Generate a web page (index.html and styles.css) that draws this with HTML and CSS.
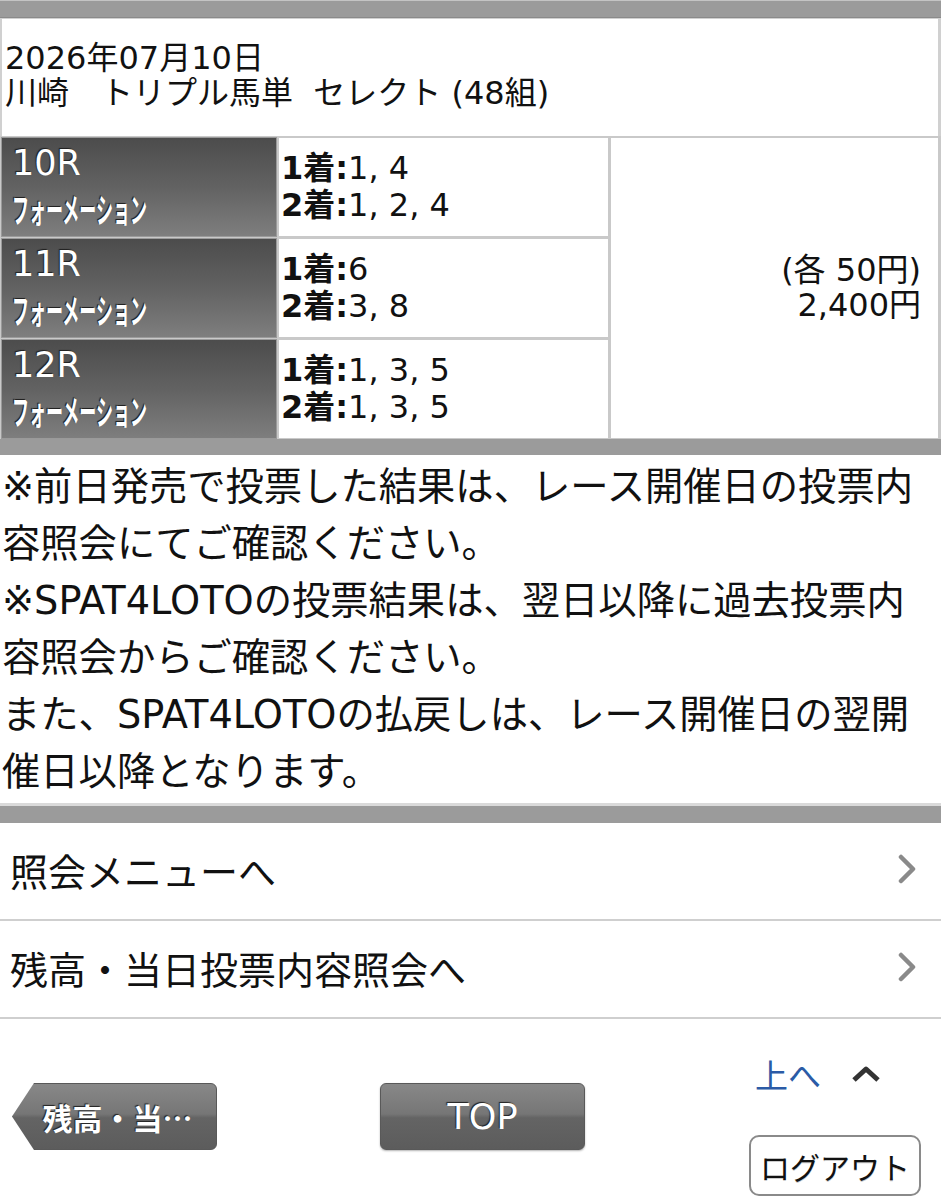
FILE: index.html
```html
<!DOCTYPE html>
<html lang="ja">
<head>
<meta charset="utf-8">
<title>投票内容照会</title>
<link rel="stylesheet" href="styles.css">
</head>
<body>
<div class="band band-top"></div>
<div class="summary">
  <div>2026年07月10日</div>
  <div>川崎　トリプル馬単&nbsp;&nbsp;セレクト (48組)</div>
</div>
<div class="bets">
  <div class="race"><span class="race-no">10R</span><span class="race-type">フォーメーション</span></div>
  <div class="picks"><div><b>1着:</b>1, 4</div><div><b>2着:</b>1, 2, 4</div></div>
  <div class="race"><span class="race-no">11R</span><span class="race-type">フォーメーション</span></div>
  <div class="picks"><div><b>1着:</b>6</div><div><b>2着:</b>3, 8</div></div>
  <div class="race"><span class="race-no">12R</span><span class="race-type">フォーメーション</span></div>
  <div class="picks"><div><b>1着:</b>1, 3, 5</div><div><b>2着:</b>1, 3, 5</div></div>
  <div class="amount"><div>(各 50円)</div><div>2,400円</div></div>
</div>
<div class="band band-low"></div>
<div class="notes">
  <p>※前日発売で投票した結果は、レース開催日の投票内容照会にてご確認ください。</p>
  <p>※SPAT4LOTOの投票結果は、翌日以降に過去投票内容照会からご確認ください。</p>
  <p>また、SPAT4LOTOの払戻しは、レース開催日の翌開催日以降となります。</p>
</div>
<div class="band band-mid"></div>
<div class="menu">
  <div class="menu-item"><span>照会メニューへ</span><svg class="chev" width="20" height="30" viewBox="0 0 20 30"><polyline points="4,3 16,15 4,27" fill="none" stroke="#8a8a8a" stroke-width="4.5" stroke-linecap="round" stroke-linejoin="round"/></svg></div>
  <div class="menu-item"><span>残高・当日投票内容照会へ</span><svg class="chev" width="20" height="30" viewBox="0 0 20 30"><polyline points="4,3 16,15 4,27" fill="none" stroke="#8a8a8a" stroke-width="4.5" stroke-linecap="round" stroke-linejoin="round"/></svg></div>
</div>
<div class="nav">
  <div class="btn btn-back">残高・当…</div>
  <div class="btn btn-top">TOP</div>
  <div class="nav-right">
    <div class="up-row"><span class="up-link">上へ</span><svg class="up-chev" width="30" height="18" viewBox="0 0 30 18"><polyline points="3,15 15,4 27,15" fill="none" stroke="#333" stroke-width="5" stroke-linejoin="round"/></svg></div>
    <div class="logout">ログアウト</div>
  </div>
</div>
</body>
</html>
```

FILE: styles.css
```css
* { box-sizing: border-box; }
html, body { margin: 0; padding: 0; background: #fff; }
body {
  width: 941px;
  font-family: "DejaVu Sans", "Noto Sans CJK JP", sans-serif;
  color: #111;
}

.band { background: #9b9b9b; }
.band-top { height: 18px; border-top: 1px solid #c4c4c4; border-bottom: 1px solid #8a8a8a; }
.band-low { height: 16px; }
.band-mid { height: 20px; border-top: 3px solid #dadada; }

.summary {
  height: 118px;
  border-left: 2px solid #d0d0d0;
  border-right: 3px solid #d0d0d0;
  border-top: 1px solid #d0d0d0;
  padding: 22px 3px 0;
  font-size: 32px;
  line-height: 35px;
}

.bets {
  display: grid;
  grid-template-columns: 274px 329px 327px;
  grid-template-rows: repeat(3, 98px);
  gap: 3px;
  padding: 2px 3px 1px 2px;
  background: #c9c9c9;
}
.race {
  grid-column: 1;
  display: flex;
  flex-direction: column;
  padding: 4px 0 0 10px;
  background: linear-gradient(to bottom, #4c4c4c 0%, #626262 50%, #7e7e7e 100%);
  box-shadow: 0 0 0 1px #9a9a9a;
  color: #fff;
  overflow: hidden;
}
.race-no {
  font-size: 35px;
  line-height: 42px;
  text-shadow: -1px -1px 1px #1e1e1e;
}
.race-type {
  display: block;
  width: 272px;
  font-family: "Noto Sans CJK JP", sans-serif;
  font-weight: bold;
  font-size: 34px;
  line-height: 50px;
  white-space: nowrap;
  transform: scaleX(0.5);
  transform-origin: left center;
  text-shadow: -2px -1px 1px #1e1e1e;
}
.picks {
  grid-column: 2;
  background: #fff;
  display: flex;
  flex-direction: column;
  justify-content: center;
  padding-left: 2px;
  font-size: 32px;
  line-height: 37px;
}
.picks b { font-weight: bold; }
.amount {
  grid-column: 3;
  grid-row: 1 / 4;
  background: #fff;
  display: flex;
  flex-direction: column;
  justify-content: center;
  align-items: flex-end;
  padding-right: 17px;
  font-size: 32px;
  line-height: 35px;
}

.notes {
  padding: 3px 4px 3px 2px;
  font-size: 38.3px;
  line-height: 57px;
}
.notes p { margin: 0; }

.menu-item {
  height: 98px;
  border-bottom: 2px solid #cfcfcf;
  display: flex;
  align-items: center;
  justify-content: space-between;
  padding: 0 24px 4px 10px;
  font-family: "Noto Sans CJK JP", sans-serif;
  font-size: 38px;
}
.chev { display: block; }

.nav {
  display: flex;
  align-items: flex-start;
  padding-left: 12px;
  height: 179px;
}
.btn {
  height: 67px;
  width: 205px;
  margin-top: 64px;
  display: flex;
  align-items: center;
  justify-content: center;
  color: #fff;
  background: linear-gradient(to bottom, #888 0%, #767676 46%, #646464 52%, #5c5c5c 100%);
  border: 1px solid #595959;
  text-shadow: -1px -1px 1px #222;
}
.btn-back {
  clip-path: polygon(0 50%, 22px 0, 100% 0, 100% 100%, 22px 100%);
  border-radius: 0 6px 6px 0;
  padding-left: 6px;
  font-family: "Noto Sans CJK JP", sans-serif;
  font-weight: bold;
  font-size: 30px;
}
.btn-top {
  margin-left: 163px;
  border-radius: 6px;
  font-size: 35px;
  box-shadow: 0 1px 2px rgba(0,0,0,0.3);
}
.nav-right {
  margin-left: 164px;
  width: 172px;
  margin-top: 35px;
}
.up-row {
  display: flex;
  align-items: center;
  padding-left: 6px;
  height: 40px;
}
.up-link {
  font-family: "Noto Sans CJK JP", sans-serif;
  font-size: 33px;
  line-height: 40px;
  color: #2b5ba6;
}
.up-chev { display: block; margin-left: 30px; }
.logout {
  margin-top: 41px;
  height: 61px;
  border: 2px solid #8a8a8a;
  border-radius: 10px;
  display: flex;
  align-items: center;
  justify-content: center;
  font-family: "Noto Sans CJK JP", sans-serif;
  font-size: 30px;
  color: #111;
  text-shadow: 0 1px 0 #ccc;
}
```
